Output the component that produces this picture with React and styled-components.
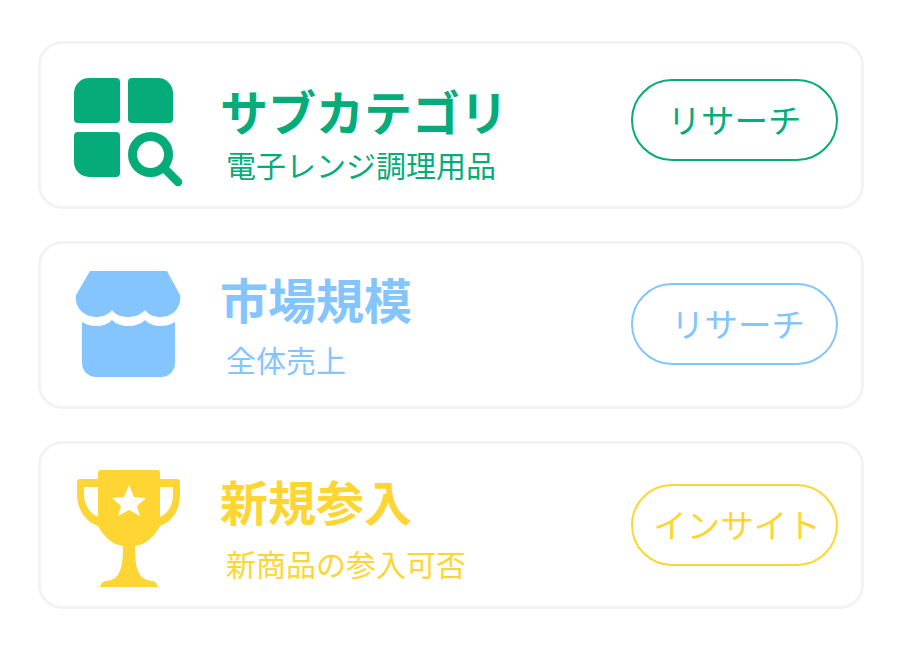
import React from 'react';
import styled, { createGlobalStyle } from 'styled-components';

const GlobalStyle = createGlobalStyle`
  html, body {
    margin: 0;
    padding: 0;
    background-color: #fff;
  }
  body {
    font-family: "Noto Sans CJK JP", "Noto Sans", sans-serif;
  }
`;

const Page = styled.div`
  width: 900px;
  height: 645px;
  box-sizing: border-box;
  padding: 41px 36px 0 38px;
  display: flex;
  flex-direction: column;
  gap: 32px;
`;

const Card = styled.section`
  box-sizing: border-box;
  height: 168px;
  border: 3px solid #f3f3f3;
  border-radius: 24px;
  display: flex;
  align-items: flex-start;
  color: ${(p) => p.$color};
`;

const IconSlot = styled.div`
  flex: none;
  width: 179px;
  height: 162px;
`;

const Icon = styled.svg`
  display: block;
  margin: ${(p) => p.$top}px 0 0 ${(p) => p.$left}px;
  fill: currentColor;
`;

const Text = styled.div`
  flex: 1;
  min-width: 0;
  padding-top: ${(p) => p.$top}px;
  display: flex;
  flex-direction: column;
  gap: ${(p) => p.$gap}px;
`;

const Title = styled.h2`
  margin: 0;
  font-size: 48px;
  line-height: 56px;
  font-weight: 700;
`;

const Subtitle = styled.p`
  margin: 0 0 0 6px;
  font-size: 30px;
  line-height: 40px;
  font-weight: 400;
`;

const ActionButton = styled.button`
  flex: none;
  box-sizing: border-box;
  width: 207px;
  height: 82px;
  margin: ${(p) => p.$top}px 23px 0 0;
  padding: 0 0 3px ${(p) => p.$indent}px;
  border: 2px solid currentColor;
  border-radius: 41px;
  background: #fff;
  color: inherit;
  font-family: inherit;
  font-size: 33.5px;
  font-weight: 400;
  white-space: nowrap;
`;

const SearchGridIcon = () => (
  <Icon $left={33} $top={34} width="110" height="110" viewBox="0 0 110 110">
    <path d="M15 0H42a4 4 0 0 1 4 4V41a4 4 0 0 1-4 4H4a4 4 0 0 1-4-4V15A15 15 0 0 1 15 0Z" />
    <path d="M58 0H84A15 15 0 0 1 99 15V41a4 4 0 0 1-4 4H58a4 4 0 0 1-4-4V4a4 4 0 0 1 4-4Z" />
    <path d="M4 54H42a4 4 0 0 1 4 4V95a4 4 0 0 1-4 4H15A15 15 0 0 1 0 84V58a4 4 0 0 1 4-4Z" />
    <circle cx="76.5" cy="76.5" r="18" fill="none" stroke="currentColor" strokeWidth="9" />
    <path d="M91 91L104 104" fill="none" stroke="currentColor" strokeWidth="8.5" strokeLinecap="round" />
  </Icon>
);

const StoreIcon = () => (
  <Icon $left={34} $top={27} width="108" height="108" viewBox="0 0 108 108">
    <path d="M15 0H92L105 24C107 36 98 46 86 46C79 46 74 44 70 39C65 44 60 46 53 46C46 46 41 44 37 39C33 44 27 46 21 46C9 46 -1 36 1 24Z" />
    <path d="M7 51C12 54 17 55 22 55C28 55 33 53 37 49C41 53 47 55 53 55C60 55 66 53 70 49C74 53 79 55 85 55C90 55 95 54 100 51V92A14 14 0 0 1 86 106H21A14 14 0 0 1 7 92Z" />
  </Icon>
);

const TrophyIcon = () => (
  <Icon $left={36} $top={26} width="108" height="120" viewBox="0 0 108 120">
    <path
      fillRule="evenodd"
      d="M21 3a3 3 0 0 1 3-3H80a3 3 0 0 1 3 3V9H100a3 3 0 0 1 3 3V24C103 40 95 52 83 56C77 68 67 75 58 76C58 90 59 100 64 106C68 111 74 110 78 112C80 113 81 117 81 117H23C23 117 24 113 26 112C30 110 36 111 40 106C45 100 46 90 46 76C37 75 27 68 21 56C9 52 0 40 0 24V12a3 3 0 0 1 3-3H21ZM21 17H7V24C7 34 12 43 21 47ZM83 17V47C92 43 96 34 96 24V17ZM52 15L57 27L69 28L60 36L63 46L52 40L41 46L44 36L35 28L47 27Z"
    />
  </Icon>
);

const rows = [
  {
    color: '#05ac7a',
    icon: <SearchGridIcon />,
    title: 'サブカテゴリ',
    subtitle: '電子レンジ調理用品',
    textTop: 38,
    gap: 6,
    button: 'リサーチ',
    buttonTop: 35,
    indent: 0,
  },
  {
    color: '#85c5ff',
    icon: <StoreIcon />,
    title: '市場規模',
    subtitle: '全体売上',
    textTop: 26,
    gap: 13,
    button: 'リサーチ',
    buttonTop: 39,
    indent: 7,
  },
  {
    color: '#ffd534',
    icon: <TrophyIcon />,
    title: '新規参入',
    subtitle: '新商品の参入可否',
    textTop: 28,
    gap: 15,
    button: 'インサイト',
    buttonTop: 40,
    indent: 5,
  },
];

export default function App() {
  return (
    <>
      <GlobalStyle />
      <Page>
        {rows.map((row) => (
          <Card key={row.title} $color={row.color}>
            <IconSlot>{row.icon}</IconSlot>
            <Text $top={row.textTop} $gap={row.gap}>
              <Title>{row.title}</Title>
              <Subtitle>{row.subtitle}</Subtitle>
            </Text>
            <ActionButton $top={row.buttonTop} $indent={row.indent}>
              {row.button}
            </ActionButton>
          </Card>
        ))}
      </Page>
    </>
  );
}
